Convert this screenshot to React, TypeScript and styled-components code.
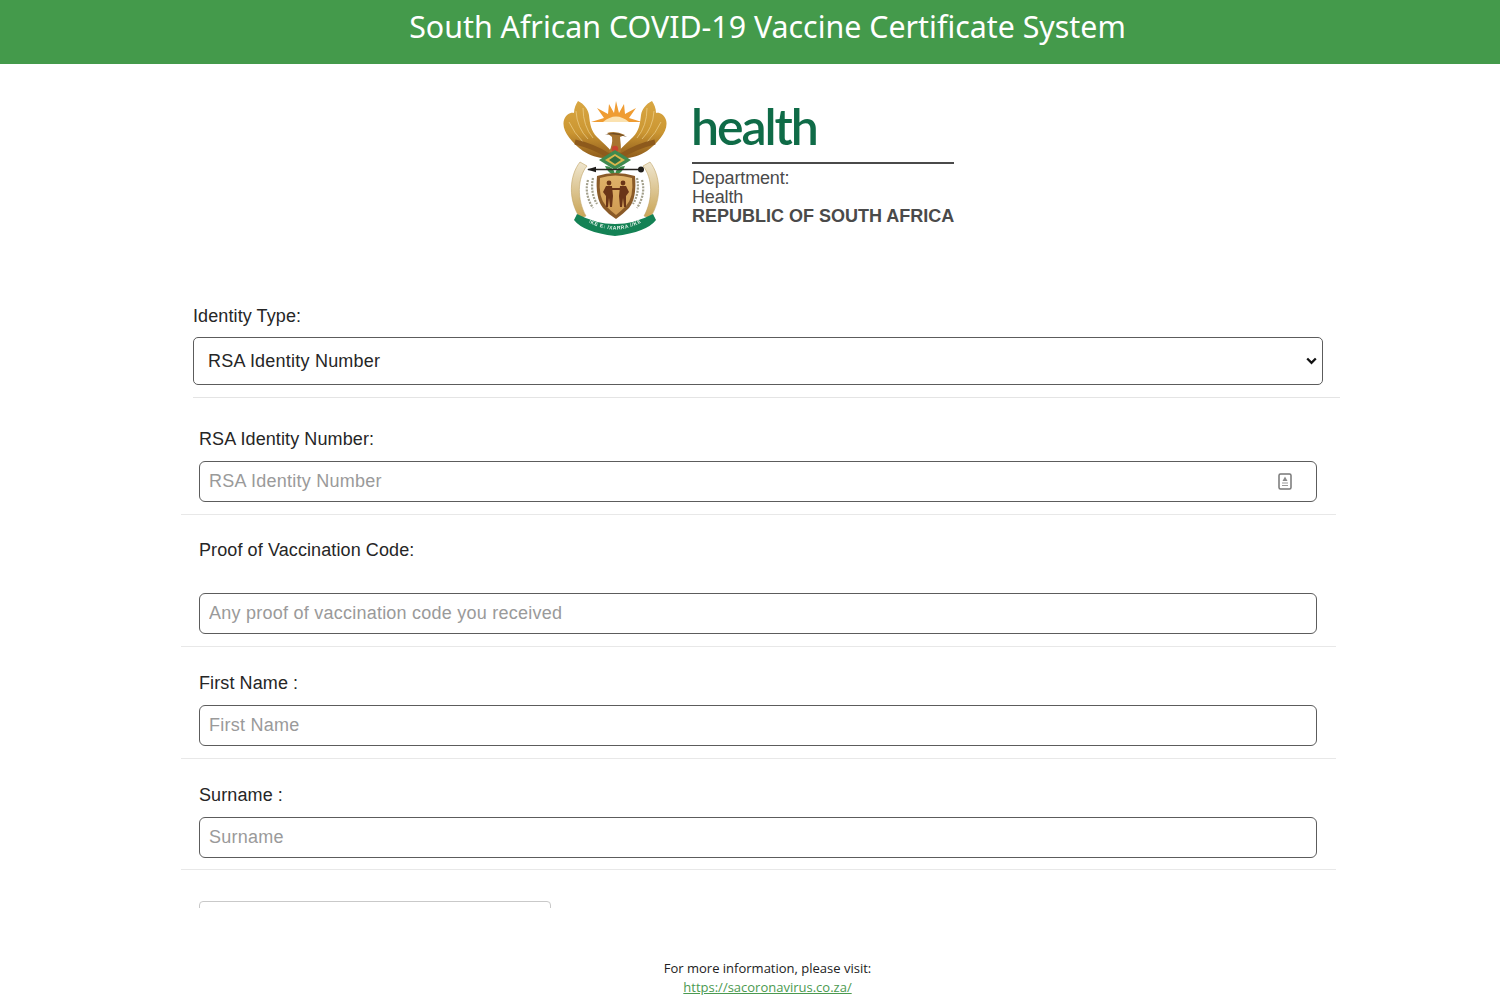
import React from "react";
import styled, { createGlobalStyle } from "styled-components";

const Global = createGlobalStyle`
  html, body { margin: 0; padding: 0; background: #fff; height: 100%; overflow: hidden; }
  * { box-sizing: border-box; }
  body { font-family: "Liberation Sans", Arial, sans-serif; color: #212529; }
`;

const Page = styled.div`
  width: 1500px;
  height: 1000px;
  display: flex;
  flex-direction: column;
`;

const Banner = styled.header`
  height: 64px;
  flex: none;
  background: #449a4b;
  display: flex;
  align-items: center;
  justify-content: center;
  padding: 0 0 12px 35px;
`;

const BannerTitle = styled.h1`
  margin: 0;
  font-family: "Noto Sans", "Open Sans", sans-serif;
  font-weight: 400;
  font-size: 30.35px;
  color: #fff;
  white-space: nowrap;
`;

const LogoRow = styled.div`
  flex: none;
  height: 236px;
  padding: 36px 0 0 17px;
  display: flex;
  justify-content: center;
  align-items: flex-start;
  gap: 25px;
`;

const CrestSvg = styled.svg`
  flex: none;
  filter: blur(0.35px);
`;

const LogoText = styled.div`
  width: 262px;
  display: flex;
  flex-direction: column;
  color: #4a4a4a;
`;

const HealthWord = styled.div`
  font-family: "Lato", sans-serif;
  font-weight: 600;
  font-size: 50px;
  line-height: 52px;
  letter-spacing: -2.1px;
  color: #0f6b47;
  height: 62px;
  margin-left: -1px;
`;

const LogoRule = styled.div`
  height: 2px;
  background: #4a4a4a;
  margin-bottom: 5px;
`;

const LogoLine = styled.div<{ $bold?: boolean }>`
  font-size: 18px;
  line-height: 19px;
  font-weight: ${(p) => (p.$bold ? 700 : 400)};
  letter-spacing: ${(p) => (p.$bold ? "0" : "-0.15px")};
  white-space: nowrap;
`;

const FormArea = styled.form`
  flex: none;
  width: 1159px;
  height: 608px;
  margin-left: 181px;
  overflow: hidden;
`;

const IdentityBlock = styled.div`
  width: 1147px;
  margin-left: 12px;
  height: 98px;
  border-bottom: 1px solid #e4e4e4;
  display: flex;
  flex-direction: column;
`;

const FieldLabel = styled.label<{ $h: number; $top?: number; $bottom?: number }>`
  display: flex;
  align-items: center;
  height: ${(p) => p.$h}px;
  padding-top: ${(p) => p.$top ?? 0}px;
  padding-bottom: ${(p) => p.$bottom ?? 0}px;
  font-size: 18px;
  letter-spacing: 0.1px;
  color: #262626;
  flex: none;
`;

const SelectWrap = styled.div`
  position: relative;
  width: 1130px;
  height: 48px;
  flex: none;
`;

const SelectBox = styled.select`
  width: 100%;
  height: 100%;
  appearance: none;
  border: 1px solid #5c5c5c;
  border-radius: 5px;
  background-color: #fff;
  padding: 0 30px 0 14px;
  font-family: "Liberation Sans", Arial, sans-serif;
  font-size: 18px;
  letter-spacing: 0.22px;
  color: #262626;
`;

const SelectChevron = styled.svg`
  position: absolute;
  top: 20px;
  right: 6px;
  pointer-events: none;
`;

const FieldRow = styled.div<{ $h: number }>`
  width: 1155px;
  height: ${(p) => p.$h}px;
  padding: 0 19px 0 18px;
  border-bottom: 1px solid #e8e8e8;
  display: flex;
  flex-direction: column;
`;

const InputWrap = styled.div`
  position: relative;
  height: 41px;
  flex: none;
`;

const TextField = styled.input`
  width: 100%;
  height: 100%;
  border: 1px solid #5c5c5c;
  border-radius: 6px;
  padding: 0 9px;
  font-family: "Liberation Sans", Arial, sans-serif;
  font-size: 18px;
  letter-spacing: 0.24px;
  color: #262626;
  background: #fff;
  &::placeholder { color: #9a9a9a; opacity: 1; }
`;

const FieldIcon = styled.svg`
  position: absolute;
  top: 12px;
  right: 25px;
`;

const ClippedBox = styled.div`
  width: 352px;
  height: 40px;
  margin: 31px 0 0 18px;
  border: 1px solid #c9c9c9;
  border-radius: 4px;
`;

const Footer = styled.footer`
  flex: none;
  padding: 51px 0 0 35px;
  display: flex;
  flex-direction: column;
  align-items: center;
  font-family: "Open Sans", "Noto Sans", sans-serif;
  font-size: 13px;
  line-height: 19px;
  color: #222;
`;

const FooterLink = styled.a`
  color: #4b9a50;
  text-decoration: underline;
`;

const Crest = () => (
  <CrestSvg width="104" height="136" viewBox="0 0 104 136">
    <defs>
      <linearGradient id="wing" x1="0" y1="0" x2="0" y2="1">
        <stop offset="0" stopColor="#d9a743" />
        <stop offset="0.55" stopColor="#cb9632" />
        <stop offset="1" stopColor="#8f5c1c" />
      </linearGradient>
      <linearGradient id="tusk" x1="0" y1="0" x2="0" y2="1">
        <stop offset="0" stopColor="#efe6cf" />
        <stop offset="1" stopColor="#c9a455" />
      </linearGradient>
      <linearGradient id="shield" x1="0" y1="0" x2="0" y2="1">
        <stop offset="0" stopColor="#dfb36a" />
        <stop offset="1" stopColor="#cf9a52" />
      </linearGradient>
      <path id="motto" d="M20 119 Q52 140 84 119" fill="none" />
    </defs>
    {/* sun */}
    <path
      d="M28 22 L41 18 L34 8 L45 14 L46 4 L51 13 L53 1 L56 13 L61 4 L62 14 L73 8 L66 18 L79 22 Z"
      fill="#ef9c32"
    />
    <path d="M40 22 Q53 11 66 22 Z" fill="#fbe2b0" />
    {/* wings */}
    <path
      d="M15 1 C21 4 25 9 26 15 C27 24 28 31 34 37 C39 42 45 47 49 52 L47 58 C37 59 28 56 20 51 C8 42 -2 30 1 20 C3 14 8 12 11 13 C11 8 13 4 15 1 Z"
      fill="url(#wing)"
    />
    <path
      d="M89 1 C83 4 79 9 78 15 C77 24 76 31 70 37 C65 42 59 47 55 52 L57 58 C67 59 76 56 84 51 C96 42 106 30 103 20 C101 14 96 12 93 13 C93 8 91 4 89 1 Z"
      fill="url(#wing)"
    />
    <g stroke="#f5dca0" strokeWidth="0.9" fill="none" opacity="0.65">
      <path d="M6 22 Q11 33 20 42" />
      <path d="M13 11 Q14 28 25 39" />
      <path d="M20 8 Q20 26 30 38" />
      <path d="M98 22 Q93 33 84 42" />
      <path d="M91 11 Q90 28 79 39" />
      <path d="M84 8 Q84 26 74 38" />
    </g>
    <path d="M12 42 Q30 46 46 56" stroke="#8d5a1c" strokeWidth="5" fill="none" />
    <path d="M92 42 Q74 46 58 56" stroke="#8d5a1c" strokeWidth="5" fill="none" />
    {/* secretary bird */}
    <path d="M44 33 Q52 30 62 35 L57 37 Q58 45 58 52 L46 52 Q50 44 49 37 Z" fill="#a8742e" />
    <path d="M42 35 Q52 30 64 37 Q52 33 42 35 Z" fill="#6d4a22" />
    <circle cx="52" cy="49" r="3.2" fill="#c8452d" />
    {/* tusks */}
    <path
      d="M17 62 C6 76 5 100 17 118 L23 116 C14 100 14 78 24 66 Z"
      fill="url(#tusk)"
      stroke="#bfa365"
      strokeWidth="0.6"
    />
    <path
      d="M87 62 C98 76 99 100 87 118 L81 116 C90 100 90 78 80 66 Z"
      fill="url(#tusk)"
      stroke="#bfa365"
      strokeWidth="0.6"
    />
    {/* protea diamond */}
    <path d="M52 50 L68 60 L52 70 L36 60 Z" fill="#3f8a4f" />
    <path d="M52 54 L62 60 L52 66 L42 60 Z" fill="#d9b64c" />
    <path d="M52 56 L58 60 L52 64 L46 60 Z" fill="#2f6f3f" />
    <path d="M42 66 Q50 66 52 74 Q54 66 62 66 Q60 72 52 76 Q44 72 42 66 Z" fill="#3b8a4a" />
    {/* spear and knobkierie */}
    <path d="M25 69.5 H78" stroke="#26231f" strokeWidth="1.6" />
    <path d="M24 69.5 L33 66.8 L33 72.2 Z" fill="#1e1c1a" />
    <circle cx="78" cy="69.5" r="3" fill="#1e1c1a" />
    {/* wheat */}
    <g stroke="#a3a08c" strokeWidth="2.2" strokeDasharray="2 1.2" fill="none">
      <path d="M25 80 Q21 94 30 108" />
      <path d="M30 78 Q27 92 34 104" />
      <path d="M79 80 Q83 94 74 108" />
      <path d="M74 78 Q77 92 70 104" />
    </g>
    {/* shield */}
    <path
      d="M34 76 Q52 70 72 76 Q74 98 66 108 Q59 115 53 119 Q46 115 40 108 Q32 98 34 76 Z"
      fill="#8a5a28"
    />
    <path
      d="M37 78 Q52 73 69 78 Q71 97 63 106 Q58 111 53 115 Q48 111 43 106 Q35 97 37 78 Z"
      fill="url(#shield)"
    />
    <g fill="#6a3518">
      <circle cx="46" cy="83" r="2.4" />
      <path d="M43 86 H49 L50 96 L49 107 H47 L46 98 L45 107 H43 L43 96 L40 92 Z" />
      <circle cx="60" cy="83" r="2.4" />
      <path d="M57 86 H63 L66 92 L63 96 L63 107 H61 L60 98 L59 107 H57 L56 96 Z" />
      <path d="M49 88 H57 V90 H49 Z" />
    </g>
    {/* ribbon */}
    <path
      d="M14 114 Q52 134 90 114 L93 120 Q84 132 52 136 Q20 132 11 120 Z"
      fill="#148255"
    />
    <text fontFamily="Liberation Sans, sans-serif" fontSize="5" fontWeight="700" fill="#e4f3ea" letterSpacing="0.5">
      <textPath href="#motto" startOffset="50%" textAnchor="middle">!KE E: /XARRA //KE</textPath>
    </text>
  </CrestSvg>
);

const IdCardIcon = () => (
  <FieldIcon width="14" height="17" viewBox="0 0 14 17" fill="none">
    <rect x="1" y="1" width="12" height="15" rx="1.5" stroke="#777" strokeWidth="1.5" />
    <path d="M7 3.5 L9.5 8 H4.5 Z" fill="#8a8a8a" />
    <path d="M4 10 H10 M4 12.5 H10" stroke="#999" strokeWidth="1.2" />
  </FieldIcon>
);

export default function App() {
  return (
    <Page>
      <Global />
      <Banner>
        <BannerTitle>South African COVID-19 Vaccine Certificate System</BannerTitle>
      </Banner>
      <LogoRow>
        <Crest />
        <LogoText>
          <HealthWord>health</HealthWord>
          <LogoRule />
          <LogoLine>Department:</LogoLine>
          <LogoLine>Health</LogoLine>
          <LogoLine $bold>REPUBLIC OF SOUTH AFRICA</LogoLine>
        </LogoText>
      </LogoRow>
      <FormArea>
        <IdentityBlock>
          <FieldLabel $h={37} $bottom={4}>Identity Type:</FieldLabel>
          <SelectWrap>
            <SelectBox defaultValue="rsa">
              <option value="rsa">RSA Identity Number</option>
            </SelectBox>
            <SelectChevron width="11" height="8" viewBox="0 0 11 8" fill="none">
              <path d="M1.2 1.5 L5.5 5.8 L9.8 1.5" stroke="#111" strokeWidth="2.3" />
            </SelectChevron>
          </SelectWrap>
        </IdentityBlock>
        <FieldRow $h={117}>
          <FieldLabel $h={63} $top={19}>RSA Identity Number:</FieldLabel>
          <InputWrap>
            <TextField placeholder="RSA Identity Number" />
            <IdCardIcon />
          </InputWrap>
        </FieldRow>
        <FieldRow $h={132}>
          <FieldLabel $h={78} $bottom={8}>Proof of Vaccination Code:</FieldLabel>
          <InputWrap>
            <TextField placeholder="Any proof of vaccination code you received" />
          </InputWrap>
        </FieldRow>
        <FieldRow $h={112}>
          <FieldLabel $h={58} $top={14}>First Name :</FieldLabel>
          <InputWrap>
            <TextField placeholder="First Name" />
          </InputWrap>
        </FieldRow>
        <FieldRow $h={111}>
          <FieldLabel $h={58} $top={14}>Surname :</FieldLabel>
          <InputWrap>
            <TextField placeholder="Surname" />
          </InputWrap>
        </FieldRow>
        <ClippedBox />
      </FormArea>
      <Footer>
        <div>For more information, please visit:</div>
        <FooterLink href="#">https://sacoronavirus.co.za/</FooterLink>
      </Footer>
    </Page>
  );
}
